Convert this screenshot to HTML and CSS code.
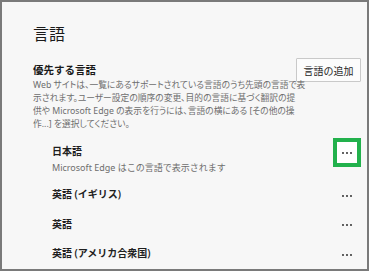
FILE: index.html
```html
<!DOCTYPE html>
<html lang="ja">
<head>
<meta charset="utf-8">
<title>言語</title>
<link rel="stylesheet" href="styles.css">
</head>
<body>
<div class="frame">
  <h1 class="title">言語</h1>
  <div class="head-row">
    <h2 class="subtitle">優先する言語</h2>
    <button class="add-btn">言語の追加</button>
  </div>
  <p class="desc">Web サイトは、一覧にあるサポートされている言語のうち先頭の言語で表<br>示されます。ユーザー設定の順序の変更、目的の言語に基づく翻訳の提<br>供や Microsoft Edge の表示を行うには、言語の横にある [その他の操<br>作...] を選択してください。</p>
  <div class="lang-list">
    <div class="lang-row">
      <div class="lang-main">
        <span class="lang-label">日本語</span>
        <button class="more-btn highlighted" aria-label="その他の操作"><svg width="10" height="2" viewBox="0 0 10 2"><circle cx="1" cy="1" r="0.9"/><circle cx="5" cy="1" r="0.9"/><circle cx="9" cy="1" r="0.9"/></svg></button>
      </div>
      <p class="lang-sub">Microsoft Edge はこの言語で表示されます</p>
    </div>
    <div class="lang-row spaced">
      <div class="lang-main">
        <span class="lang-label">英語 (イギリス)</span>
        <button class="more-btn" aria-label="その他の操作"><svg width="10" height="2" viewBox="0 0 10 2"><circle cx="1" cy="1" r="0.9"/><circle cx="5" cy="1" r="0.9"/><circle cx="9" cy="1" r="0.9"/></svg></button>
      </div>
    </div>
    <div class="lang-row">
      <div class="lang-main">
        <span class="lang-label">英語</span>
        <button class="more-btn" aria-label="その他の操作"><svg width="10" height="2" viewBox="0 0 10 2"><circle cx="1" cy="1" r="0.9"/><circle cx="5" cy="1" r="0.9"/><circle cx="9" cy="1" r="0.9"/></svg></button>
      </div>
    </div>
    <div class="lang-row">
      <div class="lang-main">
        <span class="lang-label">英語 (アメリカ合衆国)</span>
        <button class="more-btn" aria-label="その他の操作"><svg width="10" height="2" viewBox="0 0 10 2"><circle cx="1" cy="1" r="0.9"/><circle cx="5" cy="1" r="0.9"/><circle cx="9" cy="1" r="0.9"/></svg></button>
      </div>
    </div>
  </div>
</div>
</body>
</html>
```
FILE: styles.css
```css
html, body {
  margin: 0;
  padding: 0;
  background: #f7f7f7;
}
body {
  font-family: "Noto Sans", "Noto Sans CJK JP", sans-serif;
  color: #1f1f1f;
}
.frame {
  box-sizing: border-box;
  width: 369px;
  height: 271px;
  border: 2px solid #7a7a7a;
  background: #f7f7f7;
  padding: 22px 6px 0 31px;
  overflow: hidden;
}
.title {
  margin: 0;
  font-size: 16px;
  line-height: 20px;
  font-weight: 400;
  color: #1a1a1a;
}
.head-row {
  margin-top: 14px;
  height: 24px;
  display: flex;
  align-items: center;
  justify-content: space-between;
}
.subtitle {
  margin: 0;
  font-size: 10.5px;
  line-height: 14px;
  font-weight: 600;
  color: #1a1a1a;
}
.add-btn {
  box-sizing: border-box;
  height: 24px;
  width: 65px;
  padding: 0;
  border: 1px solid #c9c9c9;
  background: #fcfcfc;
  font-family: inherit;
  font-size: 10px;
  color: #262626;
  border-radius: 1px;
}
.desc {
  margin: -3px 0 0;
  font-size: 8.75px;
  line-height: 13px;
  color: #6e6e6e;
  white-space: nowrap;
  font-feature-settings: "palt";
}
.lang-list {
  margin-top: 7px;
  padding-left: 19px;
}
.lang-main {
  height: 29px;
  display: flex;
  align-items: center;
  justify-content: space-between;
}
.lang-row + .lang-row .lang-main {
  height: 29.5px;
}
.lang-label {
  font-size: 10px;
  line-height: 14px;
  font-weight: 600;
  color: #1f1f1f;
  margin-top: -3px;
}
.lang-sub {
  margin: -5px 0 0;
  font-size: 9px;
  line-height: 12px;
  color: #6e6e6e;
}
.lang-row.spaced {
  margin-top: 7px;
}
.more-btn {
  box-sizing: border-box;
  width: 28px;
  height: 29px;
  padding: 0;
  border: 4px solid transparent;
  background: transparent;
  display: flex;
  align-items: center;
  justify-content: center;
  fill: #1a1a1a;
}
.more-btn.highlighted {
  border-color: #22b14c;
  background: #ffffff;
}
```
